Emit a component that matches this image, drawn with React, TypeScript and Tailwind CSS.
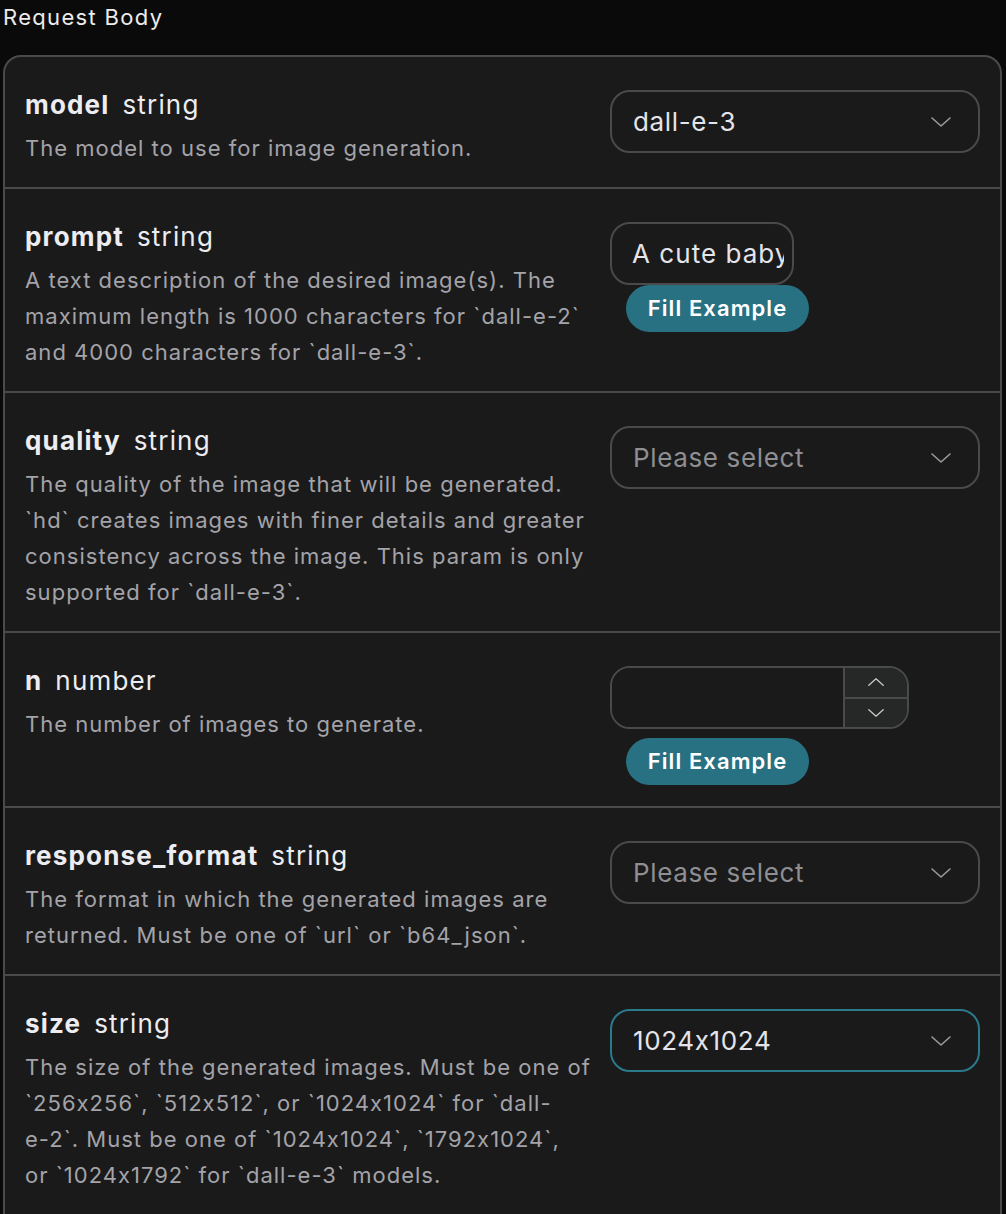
import React from "react";

type Field = {
  name: string;
  type: string;
  desc: React.ReactNode;
  control: React.ReactNode;
};

const Chevron: React.FC<{ up?: boolean; size?: number }> = ({ up, size = 20 }) => (
  <svg
    width={size}
    height={size / 2}
    viewBox="0 0 20 10"
    fill="none"
    stroke="currentColor"
    strokeWidth={1.6}
    strokeLinecap="round"
    strokeLinejoin="round"
  >
    {up ? <path d="M1 9 L10 1 L19 9" /> : <path d="M1 1 L10 9 L19 1" />}
  </svg>
);

const Select: React.FC<{ value?: string; focused?: boolean }> = ({ value, focused }) => (
  <div
    className={`flex h-[63px] w-full items-center justify-between rounded-[20px] border-2 pl-[21px] pr-[27px] ${
      focused ? "border-[#2a7a8c]" : "border-[#4a4a4a]"
    }`}
  >
    <span className={`text-[26px] ${value ? "text-[#e4e4ea]" : "text-[#8e8e93]"}`}>
      {value ?? "Please select"}
    </span>
    <span className="text-[#9a9a9e]">
      <Chevron />
    </span>
  </div>
);

const FillExample: React.FC<{ className?: string }> = ({ className }) => (
  <button
    className={`ml-[16px] flex h-[47px] w-[183px] items-center justify-center rounded-full bg-[#287182] text-[22px] font-semibold tracking-[0.05em] text-white ${className ?? ""}`}
  >
    Fill Example
  </button>
);

const fields: Field[] = [
  {
    name: "model",
    type: "string",
    desc: "The model to use for image generation.",
    control: <Select value="dall-e-3" />,
  },
  {
    name: "prompt",
    type: "string",
    desc: "A text description of the desired image(s). The maximum length is 1000 characters for `dall-e-2` and 4000 characters for `dall-e-3`.",
    control: (
      <div className="flex flex-col">
        <input
          readOnly
          value="A cute baby sea otter"
          className="h-[63px] w-[184px] rounded-[20px] border-2 border-[#4a4a4a] bg-transparent pl-[20px] pr-[8px] text-[26px] tracking-[0.04em] text-[#e4e4ea] outline-none"
        />
        <FillExample />
      </div>
    ),
  },
  {
    name: "quality",
    type: "string",
    desc: "The quality of the image that will be generated. `hd` creates images with finer details and greater consistency across the image. This param is only supported for `dall-e-3`.",
    control: <Select />,
  },
  {
    name: "n",
    type: "number",
    desc: "The number of images to generate.",
    control: (
      <div className="flex flex-col">
        <div className="flex h-[63px] w-[299px] overflow-hidden rounded-[20px] border-2 border-[#4a4a4a]">
          <div className="flex-1 bg-[#1a1a1a]" />
          <div className="flex w-[64px] flex-col border-l-2 border-[#4a4a4a] bg-[#262828] text-[#c8c8c8]">
            <div className="flex flex-1 items-center justify-center border-b-2 border-[#4a4a4a]">
              <Chevron up size={16} />
            </div>
            <div className="flex flex-1 items-center justify-center">
              <Chevron size={16} />
            </div>
          </div>
        </div>
        <FillExample className="mt-[9px]" />
      </div>
    ),
  },
  {
    name: "response_format",
    type: "string",
    desc: "The format in which the generated images are returned. Must be one of `url` or `b64_json`.",
    control: <Select />,
  },
  {
    name: "size",
    type: "string",
    desc: (
      <>
        The size of the generated images. Must be one of `256x256`, `512x512`, or `1024x1024` for `dall-
        <span className="whitespace-nowrap">e-2`.</span> Must be one of `1024x1024`, `1792x1024`,{" "}
        <span className="whitespace-nowrap">or `1024x1792`</span> for `dall-e-3` models.
      </>
    ),
    control: <Select value="1024x1024" focused />,
  },
];

export default function App() {
  return (
    <div
      className="h-[1214px] overflow-hidden bg-[#0a0a0a] pl-[3px] pr-[4px] tracking-[0.04em] [font-feature-settings:'calt'_0]"
      style={{ fontFamily: "Inter, 'Noto Sans', sans-serif" }}
    >
      <h2 className="mb-[21px] text-[22px] leading-[34px] tracking-[0.06em] text-[#ececec]">
        Request Body
      </h2>
      <div className="rounded-t-[18px] border-2 border-b-0 border-[#4a4a4a] bg-[#1a1a1a] pb-[20px]">
        {fields.map((f) => (
          <div
            key={f.name}
            className="flex items-start gap-[16px] border-b-2 border-[#4a4a4a] px-[20px] pb-[21px] pt-[32px]"
          >
            <div className="min-w-0 flex-1">
              <div className="flex items-baseline text-[26px] leading-[32px] tracking-[0.045em] text-[#ececf1]">
                <span className="font-bold">{f.name}</span>
                <span className="ml-[13px]">{f.type}</span>
              </div>
              <p className="mt-[9px] text-[22px] leading-[36px] tracking-[0.046em] text-[#a3a3a9]">
                {f.desc}
              </p>
            </div>
            <div className="w-[370px] shrink-0 pt-[1px]">{f.control}</div>
          </div>
        ))}
      </div>
    </div>
  );
}
